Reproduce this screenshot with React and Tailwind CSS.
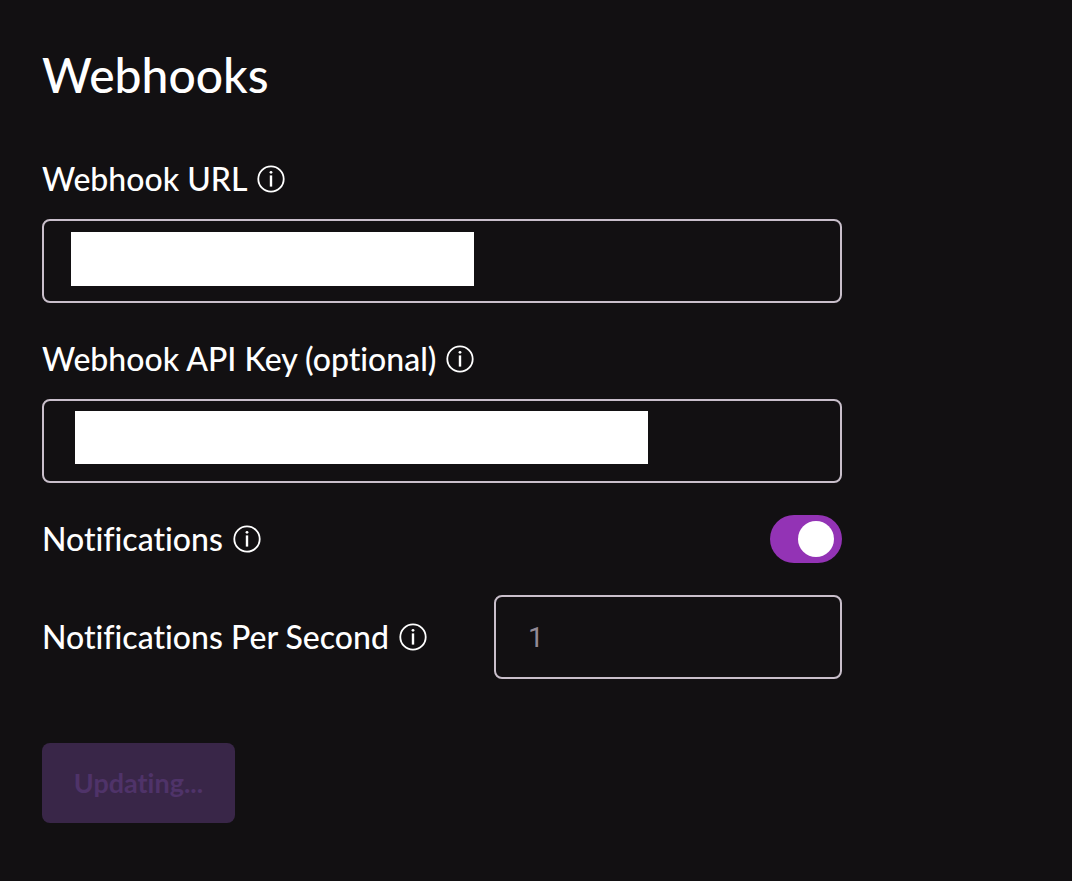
import { useState } from "react";

function InfoIcon() {
  return (
    <svg className="size-7 shrink-0" viewBox="0 0 28 28" fill="none" aria-hidden="true">
      <circle cx="14" cy="14" r="12.7" stroke="white" strokeWidth="1.8" />
      <circle cx="14" cy="7.3" r="1.4" fill="white" />
      <rect x="12.8" y="10.4" width="2.4" height="11.2" fill="white" />
    </svg>
  );
}

function FieldLabel({ htmlFor, children }) {
  return (
    <label htmlFor={htmlFor} className="flex items-center gap-2.5 text-[32px] leading-10 font-medium">
      {children}
      <InfoIcon />
    </label>
  );
}

const inputClass =
  "block h-21 w-full rounded-lg border-2 border-[#c9bfcb] bg-transparent px-8 font-['Roboto','Liberation_Sans',sans-serif] text-[28px] text-white placeholder:text-[#938a95] outline-none";

export default function App() {
  const [enabled, setEnabled] = useState(true);

  return (
    <main className="min-h-screen bg-[#121012] px-[42px] pt-[45px] pb-14 font-['Lato','Liberation_Sans',sans-serif] text-white [font-variant-ligatures:none]">
      <h1 className="mb-[54px] text-[48px] leading-[60px] font-medium">Webhooks</h1>
      <form className="flex max-w-[800px] flex-col" onSubmit={(e) => e.preventDefault()}>
        <div className="mb-9 flex flex-col gap-5">
          <FieldLabel htmlFor="url">Webhook URL</FieldLabel>
          <div className="relative">
            <input id="url" type="url" className={inputClass} />
            <span className="pointer-events-none absolute top-[13px] left-[29px] h-[54px] w-[403px] bg-white" />
          </div>
        </div>

        <div className="mb-8 flex flex-col gap-5">
          <FieldLabel htmlFor="key">Webhook API Key (optional)</FieldLabel>
          <div className="relative">
            <input id="key" type="text" className={inputClass} />
            <span className="pointer-events-none absolute top-3 left-[33px] h-[53px] w-[573px] bg-white" />
          </div>
        </div>

        <div className="mb-8 flex items-center justify-between">
          <FieldLabel htmlFor="notifications">Notifications</FieldLabel>
          <input
            id="notifications"
            type="checkbox"
            role="switch"
            checked={enabled}
            onChange={(e) => setEnabled(e.target.checked)}
            className="flex h-12 w-18 cursor-pointer appearance-none items-center rounded-full bg-[#4a454c] px-2 before:size-9 before:rounded-full before:bg-white checked:justify-end checked:bg-[#9333b5]"
          />
        </div>

        <div className="mb-16 flex items-center justify-between gap-4">
          <FieldLabel htmlFor="rate">Notifications Per Second</FieldLabel>
          <div className="w-[348px]">
            <input id="rate" type="text" inputMode="numeric" placeholder="1" className={inputClass} />
          </div>
        </div>

        <button
          type="submit"
          disabled
          className="h-20 w-[193px] rounded-lg bg-[#392648] text-[27px] font-bold text-[#4f3369] [font-variant-ligatures:none]"
        >
          Updating...
        </button>
      </form>
    </main>
  );
}
